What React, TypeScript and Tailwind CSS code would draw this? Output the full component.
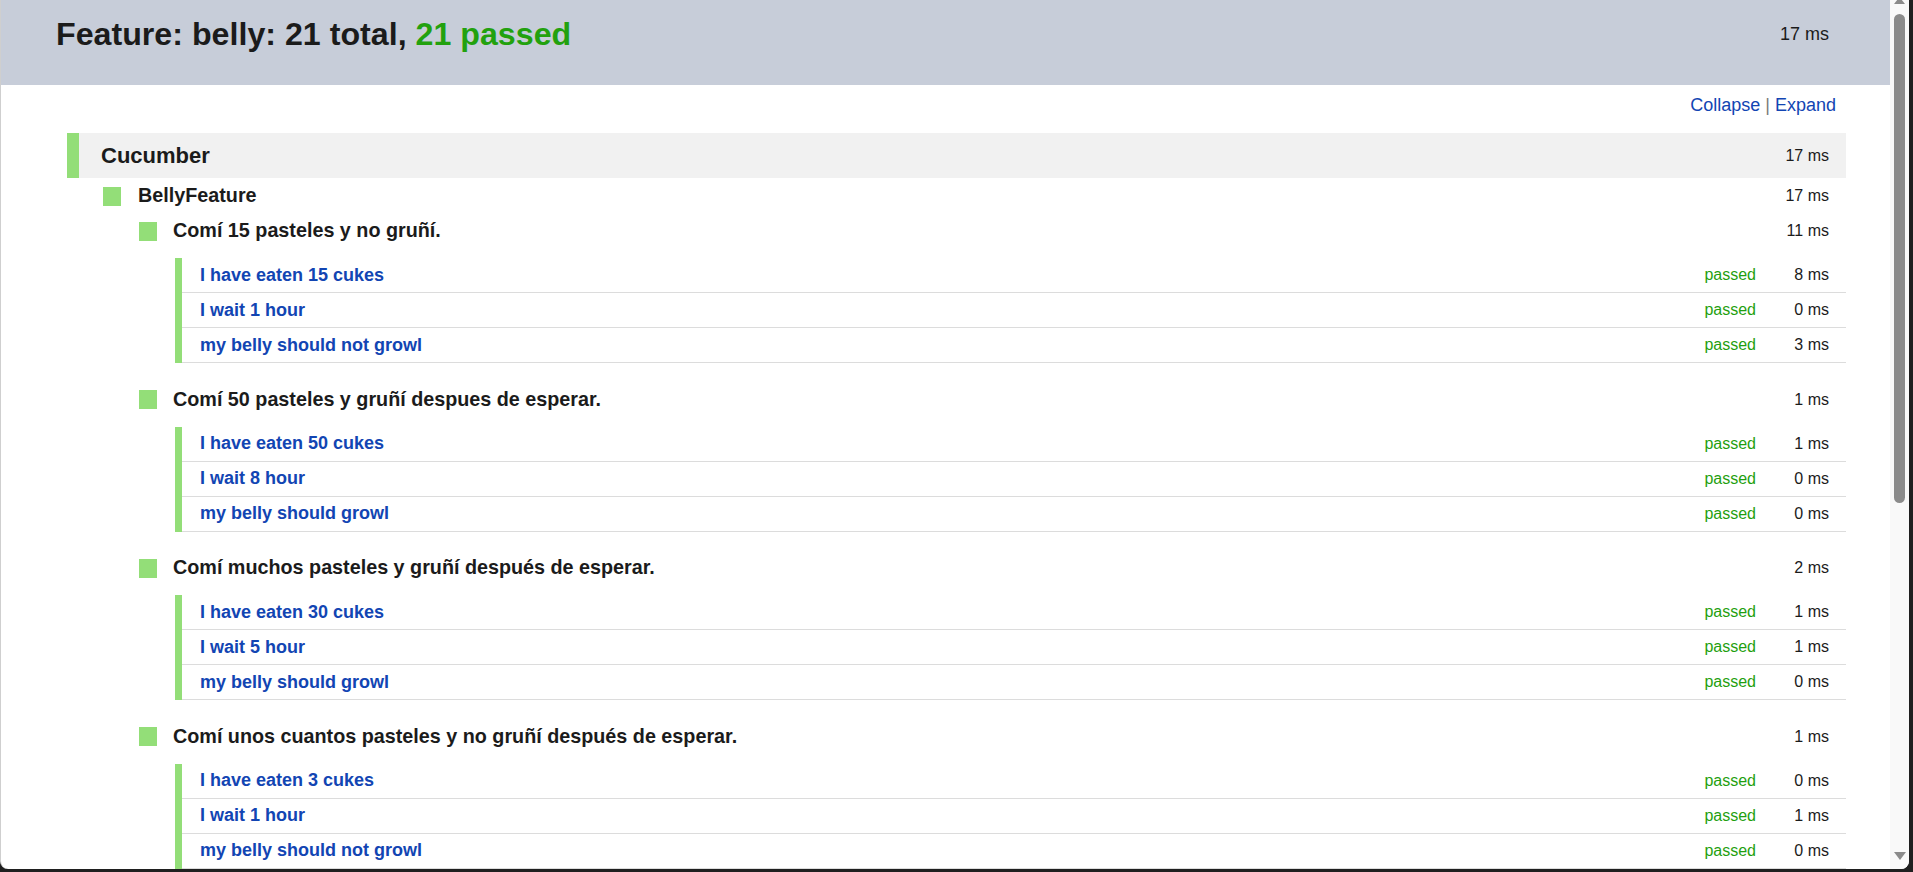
import React from "react";

type Step = { name: string; ms: string };
type Scenario = { name: string; ms: string; steps: Step[] };

const scenarios: Scenario[] = [
  {
    name: "Comí 15 pasteles y no gruñí.",
    ms: "11 ms",
    steps: [
      { name: "I have eaten 15 cukes", ms: "8 ms" },
      { name: "I wait 1 hour", ms: "0 ms" },
      { name: "my belly should not growl", ms: "3 ms" },
    ],
  },
  {
    name: "Comí 50 pasteles y gruñí despues de esperar.",
    ms: "1 ms",
    steps: [
      { name: "I have eaten 50 cukes", ms: "1 ms" },
      { name: "I wait 8 hour", ms: "0 ms" },
      { name: "my belly should growl", ms: "0 ms" },
    ],
  },
  {
    name: "Comí muchos pasteles y gruñí después de esperar.",
    ms: "2 ms",
    steps: [
      { name: "I have eaten 30 cukes", ms: "1 ms" },
      { name: "I wait 5 hour", ms: "1 ms" },
      { name: "my belly should growl", ms: "0 ms" },
    ],
  },
  {
    name: "Comí unos cuantos pasteles y no gruñí después de esperar.",
    ms: "1 ms",
    steps: [
      { name: "I have eaten 3 cukes", ms: "0 ms" },
      { name: "I wait 1 hour", ms: "1 ms" },
      { name: "my belly should not growl", ms: "0 ms" },
    ],
  },
];

function StepRow({ step }: { step: Step }) {
  return (
    <div className="flex h-[35px]">
      <div className="w-[7px] bg-[#93de78]" />
      <div className="flex flex-1 items-center border-b border-[#dcdcdc] pl-[18px] pr-[17px]">
        <span className="flex-1 text-[18px] font-bold text-[#1245b3]">{step.name}</span>
        <span className="text-[16px] text-[#1f9f10]">passed</span>
        <span className="w-[73px] text-right text-[16px] text-[#1b1b1b]">{step.ms}</span>
      </div>
    </div>
  );
}

function ScenarioBlock({ sc }: { sc: Scenario }) {
  return (
    <div className="mb-[19.5px]">
      <div className="flex h-[34px] items-center pl-[72px] pr-[17px]">
        <div className="h-[19px] w-[18px] bg-[#93de78]" />
        <span className="ml-[16px] flex-1 text-[19.75px] font-bold text-[#1b1b1b]">{sc.name}</span>
        <span className="text-[16px] text-[#1b1b1b]">{sc.ms}</span>
      </div>
      <div className="mt-[10px] pl-[108px]">
        {sc.steps.map((s, i) => (
          <StepRow key={i} step={s} />
        ))}
      </div>
    </div>
  );
}

export default function App() {
  return (
    <div
      className="h-[872px] w-[1913px] overflow-hidden bg-[#1f1f1f]"
      style={{ fontFamily: '"Liberation Sans", Arial, sans-serif' }}
    >
      <div className="flex h-[869px] w-[1909px] overflow-hidden rounded-b-[8px] border-l border-[#cfcfcf] bg-white">
        <div className="w-[1890px] overflow-hidden">
          <div className="flex h-[85px] items-center bg-[#c7cdd9] pb-[17px] pl-[55px] pr-[61px]">
            <h1 className="flex-1 text-[32.2px] font-bold leading-[32px] text-[#1b1b1b]">
              Feature: belly: 21 total, <span className="text-[#22a10e]">21 passed</span>
            </h1>
            <span className="text-[18px] text-[#1b1b1b]">17 ms</span>
          </div>
          <div className="ml-[66px] w-[1779px]">
            <div className="flex h-[48px] justify-end pr-[10px] pt-[10px] text-[18px] leading-[20px]">
              <span className="text-[#1245b3]">Collapse</span>
              <span className="mx-[5px] text-[#7a7a7a]">|</span>
              <span className="text-[#1245b3]">Expand</span>
            </div>
            <div className="flex h-[45px]">
              <div className="w-[12px] bg-[#93de78]" />
              <div className="flex flex-1 items-center bg-[#f1f1f1] pl-[22px] pr-[17px]">
                <span className="flex-1 text-[22px] font-bold text-[#1b1b1b]">Cucumber</span>
                <span className="text-[16px] text-[#1b1b1b]">17 ms</span>
              </div>
            </div>
            <div className="flex h-[36px] items-center pl-[36px] pr-[17px]">
              <div className="h-[19px] w-[18px] bg-[#93de78]" />
              <span className="ml-[17px] flex-1 text-[19.75px] font-bold text-[#1b1b1b]">BellyFeature</span>
              <span className="text-[16px] text-[#1b1b1b]">17 ms</span>
            </div>
            {scenarios.map((sc, i) => (
              <ScenarioBlock key={i} sc={sc} />
            ))}
          </div>
        </div>
        <div className="relative w-[19px] bg-[#f9f9f9]">
          <svg className="absolute left-[4px] top-[-3px]" width="11" height="8" viewBox="0 0 11 8">
            <polygon points="5.5,0 11,7 0,7" fill="#8b8b8b" />
          </svg>
          <div className="absolute left-[4px] top-[14px] h-[489px] w-[11px] rounded-full bg-[#8b8b8b]" />
          <svg className="absolute bottom-[9px] left-[4px]" width="12" height="8" viewBox="0 0 12 8">
            <polygon points="0,0 12,0 6,8" fill="#8b8b8b" />
          </svg>
        </div>
      </div>
    </div>
  );
}
